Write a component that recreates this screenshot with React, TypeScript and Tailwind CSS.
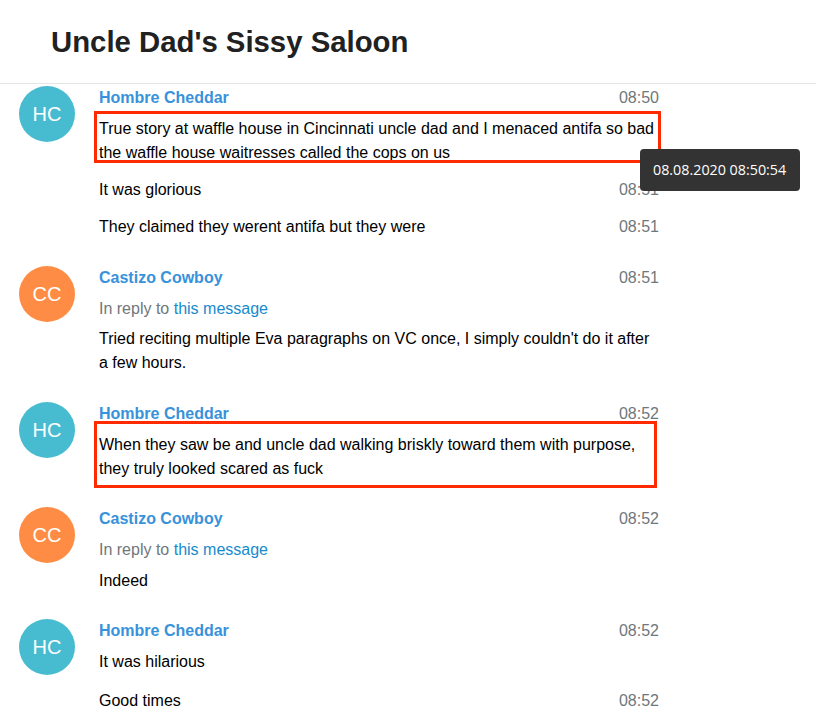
import React from "react";

type Msg = {
  joined?: boolean;
  name?: string;
  initials?: string;
  color?: string;
  date: string;
  reply?: boolean;
  text: string;
  box?: string;
};

const msgs: Msg[] = [
  {
    name: "Hombre Cheddar",
    initials: "HC",
    color: "bg-[#47bcd1]",
    date: "08:50",
    text: "True story at waffle house in Cincinnati uncle dad and I menaced antifa so bad the waffle house waitresses called the cops on us",
    box: "left-[-5px] right-[-2px] top-[-5.67px] bottom-[1.67px]",
  },
  { joined: true, date: "08:51", text: "It was glorious" },
  { joined: true, date: "08:51", text: "They claimed they werent antifa but they were" },
  {
    name: "Castizo Cowboy",
    initials: "CC",
    color: "bg-[#ff8c44]",
    date: "08:51",
    reply: true,
    text: "Tried reciting multiple Eva paragraphs on VC once, I simply couldn't do it after a few hours.",
  },
  {
    name: "Hombre Cheddar",
    initials: "HC",
    color: "bg-[#47bcd1]",
    date: "08:52",
    text: "When they saw be and uncle dad walking briskly toward them with purpose, they truly looked scared as fuck",
    box: "left-[-5px] right-[2px] top-[-11.67px] bottom-[-7.33px]",
  },
  {
    name: "Castizo Cowboy",
    initials: "CC",
    color: "bg-[#ff8c44]",
    date: "08:52",
    reply: true,
    text: "Indeed",
  },
  {
    name: "Hombre Cheddar",
    initials: "HC",
    color: "bg-[#47bcd1]",
    date: "08:52",
    text: "It was hilarious",
  },
  { joined: true, date: "08:52", text: "Good times" },
];

function Text({ text, box }: { text: string; box?: string }) {
  return (
    <div className="relative text-black leading-[24px]">
      {text}
      {box ? (
        <div className={`absolute ${box} border-[3px] border-[#ff2a00] pointer-events-none`} />
      ) : null}
    </div>
  );
}

function Message({ m }: { m: Msg }) {
  if (m.joined) {
    return (
      <div className="mt-[-13.33px] py-[13.33px] pl-[80px]">
        <div className="flex justify-between">
          <Text text={m.text} />
          <span className="text-[#70777b] leading-[24px]">{m.date}</span>
        </div>
      </div>
    );
  }
  return (
    <div className="flex py-[13.33px]">
      <div className="w-[80px] shrink-0">
        <div
          className={`w-[56px] h-[56px] rounded-full ${m.color} flex items-center justify-center text-white text-[20px] leading-[56px]`}
        >
          {m.initials}
        </div>
      </div>
      <div className="w-[560px]">
        <div className="flex justify-between pb-[6.67px] leading-[24px]">
          <span className="font-bold text-[#3892db]">{m.name}</span>
          <span className="text-[#70777b]">{m.date}</span>
        </div>
        {m.reply ? (
          <div className="pb-[6.67px] leading-[24px] text-[#70777b]">
            In reply to <span className="text-[#168acd]">this message</span>
          </div>
        ) : null}
        <Text text={m.text} box={m.box} />
      </div>
    </div>
  );
}

export default function App() {
  return (
    <div className="relative w-[816px] h-[719px] overflow-hidden bg-white font-['Liberation_Sans',Arial,sans-serif] text-[16px]">
      <header className="relative z-10 bg-white border-b border-[#e3e6e8] pt-[30px] pb-[29px] pl-[51px]">
        <div className="text-[29.33px] leading-[24px] font-bold text-[#212121]">
          Uncle Dad's Sissy Saloon
        </div>
      </header>
      <div className="ml-[19px] w-[640px] mt-[-11.33px]">
        {msgs.map((m, i) => (
          <Message key={i} m={m} />
        ))}
      </div>
      <div className="absolute z-20 left-[640px] top-[149px] w-[160px] h-[42px] rounded-[4px] bg-[#333333] flex items-center pl-[13px] text-white text-[14.3px] font-['Open_Sans',sans-serif]">
        08.08.2020 08:50:54
      </div>
    </div>
  );
}
